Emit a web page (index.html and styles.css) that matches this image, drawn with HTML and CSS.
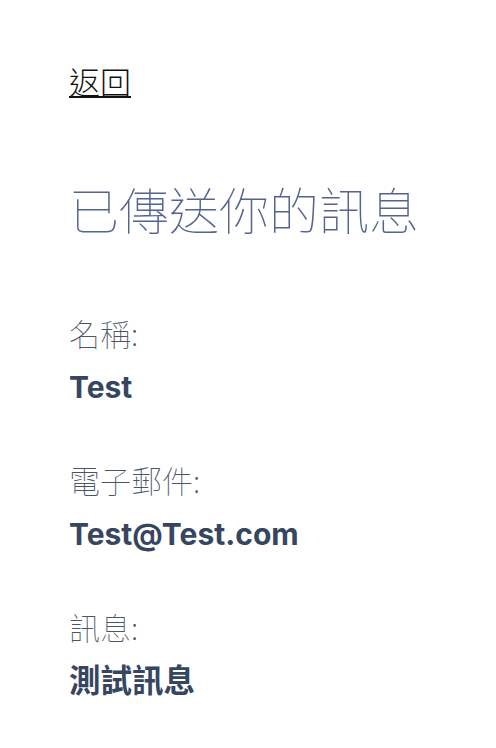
FILE: index.html
```html
<!DOCTYPE html>
<html lang="zh-Hant">
<head>
<meta charset="utf-8">
<title>已傳送你的訊息</title>
<link rel="stylesheet" href="styles.css">
</head>
<body>
<main class="page">
  <a class="back" href="#">返回</a>
  <h1 class="title">已傳送你的訊息</h1>
  <dl class="fields">
    <div class="field">
      <dt class="label">名稱:</dt>
      <dd class="value">Test</dd>
    </div>
    <div class="field">
      <dt class="label">電子郵件:</dt>
      <dd class="value">Test@Test.com</dd>
    </div>
    <div class="field">
      <dt class="label">訊息:</dt>
      <dd class="value value-cjk">測試訊息</dd>
    </div>
  </dl>
</main>
</body>
</html>
```
FILE: styles.css
```css
html, body {
  margin: 0;
  padding: 0;
  background: #ffffff;
}
.page {
  padding: 61px 0 0 69px;
  font-family: "Noto Sans CJK TC", "Noto Sans", sans-serif;
  display: flex;
  flex-direction: column;
  align-items: flex-start;
}
.back {
  font-size: 31px;
  line-height: 40px;
  font-weight: 300;
  color: #111111;
  text-decoration: underline;
  text-decoration-thickness: 2px;
  text-underline-offset: 2px;
}
.title {
  margin: 77px 0 0 0;
  font-size: 50px;
  line-height: 60px;
  font-weight: 100;
  color: #55648f;
}
.fields {
  margin: 77px 0 0 0;
  display: flex;
  flex-direction: column;
  gap: 57px;
}
.field {
  display: flex;
  flex-direction: column;
  gap: 18px;
}
.label {
  font-size: 31px;
  line-height: 36px;
  font-weight: 100;
  color: #4a5568;
}
.value {
  margin: 0;
  font-family: Inter, "Noto Sans CJK TC", sans-serif;
  font-size: 30px;
  line-height: 36px;
  font-weight: 700;
  color: #374660;
}
.value-cjk {
  font-size: 31.5px;
}
```
